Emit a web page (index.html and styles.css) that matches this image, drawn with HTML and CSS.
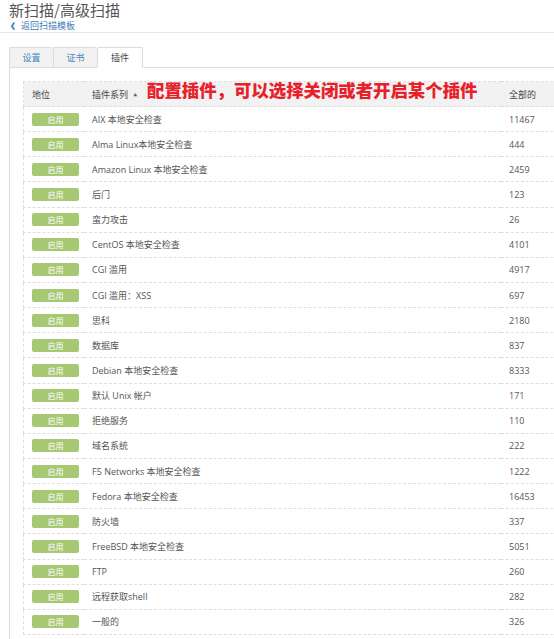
FILE: index.html
```html
<!DOCTYPE html>
<html lang="zh">
<head>
<meta charset="utf-8">
<link rel="stylesheet" href="styles.css">
</head>
<body>
<div class="page">
  <div class="head">
    <h1 class="title">新扫描/高级扫描</h1>
    <a class="back" href="#"><span class="chev">&#10094;</span>返回扫描模板</a>
  </div>
  <div class="tabs">
    <div class="tab">设置</div>
    <div class="tab">证书</div>
    <div class="tab active">插件</div>
    <div class="tab-fill"></div>
  </div>
  <div class="panel">
    <div class="tablewrap">
      <div class="note">配置插件，可以选择关闭或者开启某个插件</div>
      <table class="plugins">
        <thead>
          <tr><th class="c1">地位</th><th class="c2">插件系列 <span class="sort">&#9650;</span></th><th class="c3">全部的</th></tr>
        </thead>
        <tbody>
          <tr><td class="c1"><span class="btn">启用</span></td><td class="c2">AIX 本地安全检查</td><td class="c3">11467</td></tr>
          <tr><td class="c1"><span class="btn">启用</span></td><td class="c2">Alma Linux本地安全检查</td><td class="c3">444</td></tr>
          <tr><td class="c1"><span class="btn">启用</span></td><td class="c2">Amazon Linux 本地安全检查</td><td class="c3">2459</td></tr>
          <tr><td class="c1"><span class="btn">启用</span></td><td class="c2">后门</td><td class="c3">123</td></tr>
          <tr><td class="c1"><span class="btn">启用</span></td><td class="c2">蛮力攻击</td><td class="c3">26</td></tr>
          <tr><td class="c1"><span class="btn">启用</span></td><td class="c2">CentOS 本地安全检查</td><td class="c3">4101</td></tr>
          <tr><td class="c1"><span class="btn">启用</span></td><td class="c2">CGI 滥用</td><td class="c3">4917</td></tr>
          <tr><td class="c1"><span class="btn">启用</span></td><td class="c2">CGI 滥用：XSS</td><td class="c3">697</td></tr>
          <tr><td class="c1"><span class="btn">启用</span></td><td class="c2">思科</td><td class="c3">2180</td></tr>
          <tr><td class="c1"><span class="btn">启用</span></td><td class="c2">数据库</td><td class="c3">837</td></tr>
          <tr><td class="c1"><span class="btn">启用</span></td><td class="c2">Debian 本地安全检查</td><td class="c3">8333</td></tr>
          <tr><td class="c1"><span class="btn">启用</span></td><td class="c2">默认 Unix 帐户</td><td class="c3">171</td></tr>
          <tr><td class="c1"><span class="btn">启用</span></td><td class="c2">拒绝服务</td><td class="c3">110</td></tr>
          <tr><td class="c1"><span class="btn">启用</span></td><td class="c2">域名系统</td><td class="c3">222</td></tr>
          <tr><td class="c1"><span class="btn">启用</span></td><td class="c2">F5 Networks 本地安全检查</td><td class="c3">1222</td></tr>
          <tr><td class="c1"><span class="btn">启用</span></td><td class="c2">Fedora 本地安全检查</td><td class="c3">16453</td></tr>
          <tr><td class="c1"><span class="btn">启用</span></td><td class="c2">防火墙</td><td class="c3">337</td></tr>
          <tr><td class="c1"><span class="btn">启用</span></td><td class="c2">FreeBSD 本地安全检查</td><td class="c3">5051</td></tr>
          <tr><td class="c1"><span class="btn">启用</span></td><td class="c2">FTP</td><td class="c3">260</td></tr>
          <tr><td class="c1"><span class="btn">启用</span></td><td class="c2">远程获取shell</td><td class="c3">282</td></tr>
          <tr><td class="c1"><span class="btn">启用</span></td><td class="c2">一般的</td><td class="c3">326</td></tr>
        </tbody>
      </table>
    </div>
  </div>
</div>
</body>
</html>
```
FILE: styles.css
```css
html, body {
  margin: 0;
  padding: 0;
  overflow: hidden;
  background: #fff;
}
body {
  font-family: "Open Sans", "Noto Sans CJK SC", sans-serif;
  color: #555;
  font-size: 9px;
}
.page {
  width: 600px;
}
.head {
  padding: 1px 0 0 9px;
  height: 31px;
  border-bottom: 1px solid #e6e6e6;
}
.title {
  margin: 0;
  font-weight: normal;
  font-size: 15px;
  line-height: 18px;
  color: #555;
  font-family: "Noto Sans CJK SC", sans-serif;
}
.back {
  display: flex;
  align-items: center;
  gap: 4px;
  margin-top: 1px;
  color: #3d7bb6;
  text-decoration: none;
  font-size: 9px;
  line-height: 11px;
  font-family: "Noto Sans CJK SC", sans-serif;
}
.chev {
  font-size: 7px;
  font-weight: bold;
  margin-left: 1px;
  margin-right: 1px;
}
.tabs {
  display: flex;
  margin-top: 14px;
  padding-left: 9px;
  height: 21px;
}
.tab {
  width: 44px;
  box-sizing: border-box;
  border: 1px solid #dcdcdc;
  border-right: none;
  background: #f2f2f2;
  color: #4a86bd;
  font-family: "Noto Sans CJK SC", sans-serif;
  font-size: 9px;
  display: flex;
  align-items: center;
  justify-content: center;
  border-radius: 2px 2px 0 0;
}
.tab.active {
  background: #fff;
  color: #444;
  border-right: 1px solid #dcdcdc;
  border-bottom-color: #fff;
  width: 46px;
}
.tab-fill {
  flex: 1;
  border-bottom: 1px solid #dcdcdc;
}
.panel {
  margin-left: 9px;
  border-left: 1px solid #dcdcdc;
  padding: 13px 0 40px 13px;
}
.tablewrap {
  position: relative;
}
.note {
  position: absolute;
  left: 124px;
  top: -2px;
  font-family: "Noto Sans CJK SC", sans-serif;
  font-weight: 900;
  font-size: 17.4px;
  line-height: 22px;
  color: #e8202a;
  white-space: nowrap;
}
.plugins {
  border-collapse: collapse;
  width: 580px;
  table-layout: fixed;
}
.plugins th, .plugins td {
  height: 24.15px;
  padding: 0 0 0 8px;
  text-align: left;
  font-weight: normal;
  font-size: 9px;
  border-top: 1px dashed #dedede;
  border-bottom: 1px dashed #dedede;
  font-family: "Open Sans", "Noto Sans CJK SC", sans-serif;
  color: #555;
  white-space: nowrap;
}
.plugins th {
  height: 24px;
  background: #f2f2f2;
  color: #444;
}
.plugins .c1 {
  width: 52px;
  border-left: 1px dashed #dedede;
}
.plugins .c2 {
  width: 409px;
}
.sort {
  font-size: 4px;
  margin-left: 3px;
  vertical-align: middle;
  color: #666;
}
.btn {
  display: flex;
  width: 47px;
  height: 13px;
  align-items: center;
  justify-content: center;
  background: #a6c873;
  color: #fff;
  border-radius: 2px;
  font-family: "Noto Sans CJK SC", sans-serif;
  font-size: 8px;
}
```
